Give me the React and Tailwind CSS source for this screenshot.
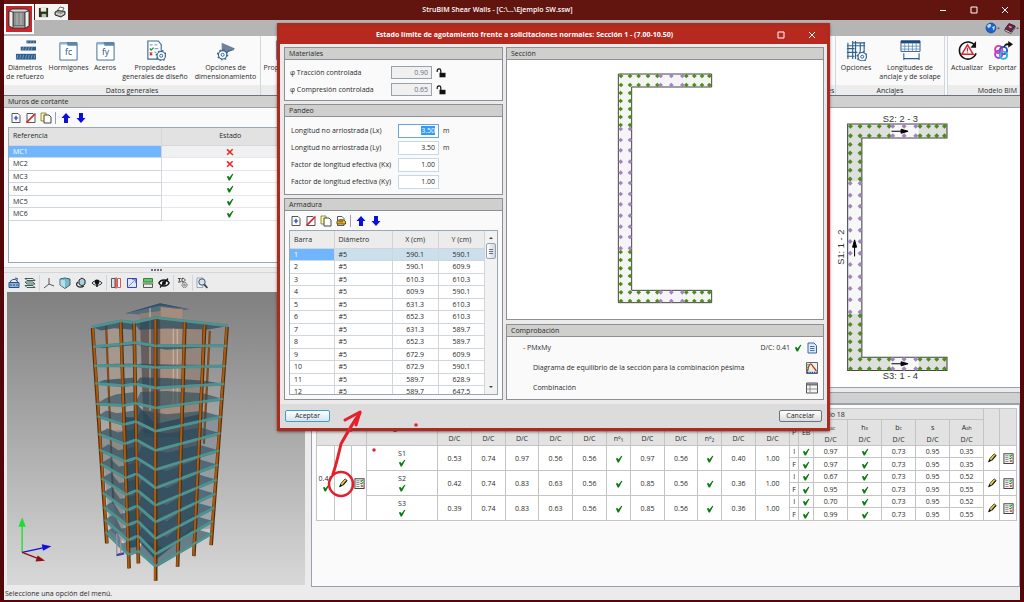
import React, { useEffect, useRef } from "react";

const walls = [
  { ref: "MC1", ok: false },
  { ref: "MC2", ok: false },
  { ref: "MC3", ok: true },
  { ref: "MC4", ok: true },
  { ref: "MC5", ok: true },
  { ref: "MC6", ok: true },
];

const bars = [
  ["590.1", "590.1"],
  ["590.1", "609.9"],
  ["610.3", "610.3"],
  ["609.9", "590.1"],
  ["631.3", "610.3"],
  ["652.3", "610.3"],
  ["631.3", "589.7"],
  ["652.3", "589.7"],
  ["672.9", "609.9"],
  ["672.9", "590.1"],
  ["589.7", "628.9"],
  ["589.7", "647.5"],
];

const OK = "ok";
const segments = [
  {
    name: "S1",
    dc: ["0.53", "0.74", "0.97", "0.56", "0.56", OK, "0.97", "0.56", OK, "0.40", "1.00"],
    i: ["0.97", OK, "0.73", "0.95", "0.35"],
    f: ["0.97", OK, "0.73", "0.95", "0.35"],
  },
  {
    name: "S2",
    dc: ["0.42", "0.74", "0.83", "0.63", "0.56", OK, "0.85", "0.56", OK, "0.36", "1.00"],
    i: ["0.67", OK, "0.73", "0.95", "0.52"],
    f: ["0.95", OK, "0.73", "0.95", "0.55"],
  },
  {
    name: "S3",
    dc: ["0.39", "0.74", "0.83", "0.63", "0.56", OK, "0.85", "0.56", OK, "0.36", "1.00"],
    i: ["0.70", OK, "0.73", "0.95", "0.52"],
    f: ["0.99", OK, "0.73", "0.95", "0.55"],
  },
];

const dcHeads = ["D/C", "D/C", "D/C", "D/C", "D/C", "nº₁", "D/C", "D/C", "nº₂", "D/C", "D/C"];
const colWidths = [18, 17, 15, 71, 34, 34, 33, 34, 34, 24, 34, 33, 24, 34, 34, 9, 15, 34, 34, 34, 34, 34, 16, 17];

/* ---------- small icons ---------- */

function Svg({ className = "size-3", box = "0 0 12 12", children }) {
  return (
    <svg viewBox={box} className={className + " shrink-0"} fill="none" aria-hidden="true">
      {children}
    </svg>
  );
}

const Check = ({ className = "inline-block size-2 align-middle" }) => (
  <Svg className={className} box="0 0 8 8">
    <path d="M.8 3.6 2.6 3 3.4 4.6 6.400.8 7.400 1 3.900 7.400H2.700Z" fill="#0b7a12" />
  </Svg>
);

const Cross = () => (
  <Svg className="inline-block size-2 align-middle" box="0 0 8 8">
    <path d="M1 1.4 7 7M6.6 1.2 1.2 6.8" stroke="#e0242a" strokeWidth="1.5" />
  </Svg>
);

const NewIcon = () => (
  <Svg>
    <path d="M2 1.500H8L10 3.500V10.500H2Z" fill="#fff" stroke="#444" strokeWidth=".9" />
    <path d="M6 3.800V8.200M3.800 6H8.200" stroke="#123cc0" strokeWidth="1.200" />
  </Svg>
);
const DeleteIcon = () => (
  <Svg>
    <path d="M2 1.500H8L10 3.500V10.500H2Z" fill="#fff" stroke="#444" strokeWidth=".9" />
    <path d="M1.500 10.500 10.500 1.500" stroke="#d8202a" strokeWidth="1.700" />
  </Svg>
);
const CopyIcon = () => (
  <Svg>
    <path d="M1 1H6V9H1Z" fill="#fbf7a0" stroke="#77762a" strokeWidth=".8" />
    <path d="M4 3H9L11 5V11H4Z" fill="#fff" stroke="#333" strokeWidth=".9" />
  </Svg>
);
const MixIcon = () => (
  <Svg>
    <path d="M2.500 1.500H7L9 3.500V10.500H2.500Z" fill="#fff" stroke="#444" strokeWidth=".9" />
    <path d="M2 6.500C3 4 9 4 10.500 6.500V9H2Z" fill="#e8c020" stroke="#3a2c00" strokeWidth=".8" />
    <path d="M3.500 6.800H8" stroke="#c22" strokeWidth="1" />
    <path d="M3 5.500 6.500 4 8.500 5.500Z" fill="#2a8c2f" />
  </Svg>
);
const UpIcon = () => (
  <Svg>
    <path d="M6 1 10.500 6H8V11H4V6H1.500Z" fill="#0a10d8" />
  </Svg>
);
const DownIcon = () => (
  <Svg>
    <path d="M6 11 10.500 6H8V1H4V6H1.500Z" fill="#0a10d8" />
  </Svg>
);
const Pencil = () => (
  <Svg className="inline-block size-[10px] align-middle">
    <path d="M2 10.500 3.500 6.500 8.500 1 10.800 2.800 6 8.500Z" fill="#e6d23a" stroke="#222" strokeWidth=".9" />
    <path d="M1.500 11 3 7.500 5.500 9Z" fill="#111" />
    <path d="M6 8.500 10.800 2.800" stroke="#222" strokeWidth="1.500" />
  </Svg>
);
const ListIcon = () => (
  <Svg className="inline-block size-[11px] align-middle">
    <path d="M1 .8H11V11.400H1Z" fill="#f4f4f4" stroke="#444" strokeWidth="1.100" />
    <path d="M2.500 3H6M2.500 5H6M2.500 7H6M2.500 9.300H6" stroke="#777" strokeWidth=".9" />
    <path d="M7 2.800 8 3.700 9.800 2M7 5.500 8 6.400 9.800 4.800" stroke="#15902a" strokeWidth="1.100" />
    <path d="M7.500 7.800 9.500 9.800M9.500 7.800 7.500 9.800" stroke="#d22" strokeWidth="1" />
  </Svg>
);
const Padlock = () => (
  <Svg className="size-[10px]" box="0 0 10 10">
    <path d="M1.200 4V2.800a1.700 1.700 0 0 1 3.600-.3V5" stroke="#111" strokeWidth="1.200" />
    <path d="M3.500 4.800H9.500V9.300H3.500Z" fill="#111" />
  </Svg>
);

/* ---------- view toolbar icons ---------- */

const viewIcons = [
  { label: "Vistas", d: <><path d="M1 5.500H11V10.500H1Z" fill="#8fb4dc" stroke="#28527e" /><path d="M2.500 5C3 1.500 9 1.500 9.500 5M7 1 9.500 1.500 8.500 4M3 7v2M6 7v2M9 7v2" stroke="#28527e" /></> },
  { label: "Plantas", end: true, d: <path d="M1 1.500H9L11 3.500H3ZM1 5H9L11 7H3ZM1 8.500H9L11 10.500H3Z" fill="#e3eeea" stroke="#2e4a48" strokeWidth=".9" /> },
  { label: "Ejes", d: <path d="M6 1V7L1 11M6 7 11 9" stroke="#555" strokeWidth="1" /> },
  { label: "Volumen", d: <><path d="M1 2 6 1 11 2V8L6 11.500 1 8Z" fill="#79b8c8" stroke="#2e5866" strokeWidth=".9" /><path d="M6 3.500V11L1.500 8V2.500Z" fill="#b9dde6" /></> },
  { label: "Girar", d: <><path d="M4 3 7 1 10 3V7L7 9 4 7Z" fill="#a9cfe0" stroke="#222" /><path d="M3 5C-1 8 4 12 9 9" stroke="#222" strokeWidth="1.200" /></> },
  { label: "Órbita", end: true, d: <><path d="M1 6C3 3 9 3 11 6 9 9 3 9 1 6Z" stroke="#333" /><circle cx="6" cy="5" r="2.400" fill="#111" /><path d="M6 7V10" stroke="#111" strokeWidth="1.500" /></> },
  { label: "Alzado", d: <><path d="M1.500 1.500H5V10.500H1.500Z" fill="#cfe6f0" stroke="#333" strokeWidth=".8" /><path d="M6 .5V11.500" stroke="#e02020" strokeWidth="1.300" /><path d="M7.500 1.500H10.500V10.500H7.500Z" fill="#fff" stroke="#c33" strokeWidth=".8" /></> },
  { label: "Corte", d: <><path d="M1.500 1.500H10.500V10.500H1.500Z" fill="#dfe6fa" stroke="#2438a8" strokeWidth=".9" /><path d="M2.500 9.500 9.500 2.500M6 2.500H9.500V6" stroke="#6377cc" strokeWidth=".8" /></> },
  { label: "Nivel", d: <><path d="M1.500 1.500H10.500V5H1.500Z" fill="#5ecb6a" stroke="#2a6a30" strokeWidth=".8" /><path d="M1.500 7H10.500V10.500H1.500Z" fill="#eee" stroke="#333" strokeWidth=".8" /><path d="M.5 6H11.500" stroke="#169a26" strokeWidth=".9" strokeDasharray="2 1" /></> },
  { label: "Ocultar", end: true, d: <><path d="M.8 6C3 2 9 2 11.200 6 9 10 3 10 .8 6Z" fill="#fff" stroke="#111" strokeWidth="1.300" /><circle cx="6" cy="6" r="2" fill="#111" /><path d="M2 10.500 10 1.500" stroke="#111" strokeWidth="1.200" /></> },
  { label: "3D", end: true, d: <><path d="M1 1.500H3.500L2 3 3.500 5H1M5 1.200V5C9 5 9 1.200 5 1.200Z" stroke="#333" strokeWidth=".9" /><circle cx="7.500" cy="8" r="2.600" fill="#ddd" stroke="#666" strokeWidth="1" strokeDasharray="1.500 .6" /><circle cx="7.500" cy="8" r=".9" stroke="#666" strokeWidth=".7" /></> },
  { label: "Buscar", d: <><path d="M1 1H7V10.500H1Z" fill="#eef2f6" stroke="#8899aa" strokeWidth=".8" /><circle cx="6" cy="5" r="3.200" fill="#cfe4f2" stroke="#456" strokeWidth="1" /><path d="M8.300 7.400 11.300 11" stroke="#345" strokeWidth="1.800" /></> },
];

/* ---------- ribbon icons ---------- */

const gear = (
  <>
    <circle cx="17" cy="16.500" r="4.400" fill="#fff" stroke="#2f6190" strokeWidth="1.200" />
    <circle cx="17" cy="16.500" r="5.300" stroke="#2f6190" strokeWidth="1.300" strokeDasharray="1.700 2.460" />
    <circle cx="17" cy="16.500" r="1.600" stroke="#2f6190" strokeWidth="1" />
  </>
);

const folder = (text) => (
  <>
    <path d="M2 3H20V21H2Z" fill="#fff" stroke="#3b6a94" strokeWidth="1" />
    <path d="M2 3.500H20" stroke="#8fb0cc" strokeWidth="2.400" />
    <path d="M9 2H20V6H10Z" fill="#5d85a8" />
    <text x="11" y="16" textAnchor="middle" fontSize="9" fill="#23507c">{text}</text>
  </>
);

const ribbonIcons = {
  bars: (
    <>
      <path d="M12 2H22" stroke="#2b5d8c" strokeWidth="3" />
      <path d="M1 17.500H22" stroke="#2b5d8c" strokeWidth="6" />
      <path d="M6 9H22" stroke="#2b5d8c" strokeWidth="4" />
      <path d="M3 15.500 2 19.500M6 15.500 5 19.500M9 15.500 8 19.500M12 15.500 11 19.500M15 15.500 14 19.500M18 15.500 17 19.500M21 15.500 20 19.500M9 7.500 8 10.500M12 7.500 11 10.500M15 7.500 14 10.500M18 7.500 17 10.500M14 1 13 3M17 1 16 3M20 1 19 3" stroke="#bcd0e2" strokeWidth=".6" />
    </>
  ),
  fc: folder("fc"),
  fy: folder("fy"),
  props: (
    <>
      <path d="M3 1H14L17 5V20H3Z" fill="#fff" stroke="#3b6a94" strokeWidth="1.200" />
      <path d="M5 5H8M10 5H13M10 9H14M10 13H12" stroke="#86a6c4" strokeWidth="1.300" />
      <path d="M5 9 6.500 10.500 9 8" stroke="#1b9a38" strokeWidth="1.400" />
      <path d="M5 13 7.500 16M7.500 13 5 16" stroke="#c33" strokeWidth="1.200" />
      {gear}
    </>
  ),
  design: (
    <g>
      <path d="M7 3V16L21 9Z" fill="#71809c" />
      <g transform="translate(-9 -1)">{gear}</g>
      <path d="M13 12 20 10" stroke="#2f6190" />
    </g>
  ),
  columns: (
    <>
      <path d="M2 3V20M7 1V20M10 1V20M19 2V13M15 3V12M1 6H20M1 9H9M1 13H12M1 17H9M7 3H20" stroke="#2f6190" strokeWidth="1.200" />
      <g transform="translate(0 1)">{gear}</g>
    </>
  ),
  lengths: (
    <>
      <path d="M1 1H21V12H1Z" fill="#fff" stroke="#2c5c8c" strokeWidth="1" />
      <path d="M1 2H21" stroke="#1c4a80" strokeWidth="3" />
      <path d="M1 6.500H21M1 9.500H21M5 3V12M9 3V12M13 3V12M17 3V12" stroke="#5b84ac" strokeWidth=".8" />
      <path d="M4 14V21M20 14V21M4 19.500H20" stroke="#2c5c8c" strokeWidth="1.100" />
    </>
  ),
  refresh: (
    <>
      <path d="M19 6A9 9 0 1 0 20 14" stroke="#111" strokeWidth="1.600" />
      <path d="M20 1V8H14Z" fill="#111" />
      <path d="M11 5 17 15H5Z" fill="#fff" stroke="#d8242c" strokeWidth="1.500" />
      <path d="M11 8V12M11 13V14" stroke="#d8242c" strokeWidth="1.300" />
    </>
  ),
  share: (
    <>
      <circle cx="7" cy="10" r="3.800" stroke="#e0389c" strokeWidth="2" />
      <circle cx="12" cy="11" r="3.800" stroke="#3250d0" strokeWidth="2" />
      <circle cx="7" cy="15" r="3.800" stroke="#b03fd8" strokeWidth="2" />
      <circle cx="12" cy="16" r="3.800" stroke="#1fb6d8" strokeWidth="2" />
      <path d="M12 8C13 4 15 3.500 17 3.500V1L22 4.500 17 8V5.500C15 5.500 14 6 12 8Z" fill="#111" />
    </>
  ),
};

function RibbonItem({ icon, lines, className }) {
  return (
    <button className={"flex shrink-0 flex-col items-center pt-1 leading-[9px] " + className}>
      <Svg className="mb-[2px] size-[21px]" box="0 0 22 22">{ribbonIcons[icon]}</Svg>
      {lines.map((l) => (
        <span key={l} className="whitespace-nowrap">{l}</span>
      ))}
    </button>
  );
}

function RibbonGroup({ title, className = "", children }) {
  return (
    <div className={"flex flex-col border-r border-gray-300 " + className}>
      <div className="flex flex-1">{children}</div>
      <div className="h-[10px] overflow-hidden bg-[#ececec] text-center leading-[12px] whitespace-nowrap">{title}</div>
    </div>
  );
}

/* ---------- shared pieces ---------- */

function Panel({ title, className = "", children }) {
  return (
    <section className={"flex flex-col border border-[#8c8f94] bg-[#fafafa] " + className}>
      <h2 className="h-3 shrink-0 border-b border-[#8c8f94] bg-[#cfcfcd] px-1 leading-[11px]">{title}</h2>
      {children}
    </section>
  );
}

function IconButton({ label, wide, children }) {
  return (
    <button aria-label={label} className={"flex h-[15px] items-center justify-center " + (wide ? "w-4" : "w-[15px]")}>
      {children}
    </button>
  );
}

function EditTools({ mix }) {
  return (
    <div className="flex h-[19px] shrink-0 items-center">
      <IconButton label="Añadir"><NewIcon /></IconButton>
      <IconButton label="Borrar"><DeleteIcon /></IconButton>
      <IconButton label="Copiar"><CopyIcon /></IconButton>
      {mix && <IconButton label="Editar"><MixIcon /></IconButton>}
      <span className="mx-[2px] h-3 w-px bg-gray-400" />
      <IconButton label="Subir"><UpIcon /></IconButton>
      <IconButton label="Bajar"><DownIcon /></IconButton>
    </div>
  );
}

/* ---------- wall section drawing ---------- */

const armX = [348, 375, 401, 429, 457, 544, 568, 591, 613];
const armPurple = [467, 499, 532];
const webGreen = [219, 243, 267, 291, 315, 696, 720, 745, 768, 792];
const webPurple = [327, 360, 391, 425, 458, 489, 522, 553, 587, 620, 651, 685];

function WallShape({ end = "#f3f5f0", mid = "#f6f3f9", transform }) {
  const dots = [];
  [168, 195, 817, 843].forEach((y) => {
    armX.forEach((x) => dots.push([x, y, "#4f8a1c"]));
    armPurple.forEach((x) => dots.push([x, y, "#a284bd"]));
  });
  [347, 375].forEach((x) => {
    webGreen.forEach((y) => dots.push([x, y, "#4f8a1c"]));
    webPurple.forEach((y) => dots.push([x, y, "#a284bd"]));
  });
  return (
    <g transform={transform}>
      <path d="M340 162H620V201H380V811H620V848H340Z" fill={end} />
      <path d="M460 162H540V201H460ZM460 811H540V848H460ZM340 321H380V690H340Z" fill={mid} />
      <path d="M340 162H620V201H380V811H620V848H340Z" fill="none" stroke="#444" strokeWidth="3" />
      {dots.map(([x, y, c], i) => (
        <path key={i} d={`M${x - 7} ${y}L${x} ${y - 7}L${x + 7} ${y}L${x} ${y + 7}Z`} fill={c} />
      ))}
    </g>
  );
}

function WallPreview() {
  return (
    <svg viewBox="18 39 567 840" className="h-full w-[189px]" role="img" aria-label="Segmentos del muro">
      <WallShape end="#dde0dc" mid="#f7f7f7" transform="translate(-296 -88) scale(1.068 1.0816)" />
      <g fill="#333" fontSize="28" fontFamily="'Liberation Sans', Arial, sans-serif" textAnchor="middle">
        <text x="226" y="81">S2: 2 - 3</text>
        <text x="226" y="856">S3: 1 - 4</text>
        <text x="56" y="458" transform="rotate(-90 56 458)">S1: 1 - 2</text>
      </g>
      <g stroke="#000" strokeWidth="3" fill="#000">
        <path d="M199 109H232M228 103 249 109 228 115Z" />
        <path d="M199 809H232M228 803 249 809 228 815Z" />
        <path d="M88 486V454M82 458 88 436 94 458Z" />
      </g>
    </svg>
  );
}

/* ---------- 3D building ---------- */

const left = [168, 228, 285, 338, 400, 437, 490, 538, 580, 624, 667, 710, 748, 785];
const notchA = [150, 220, 285, 345, 405, 462, 520, 573, 623, 673, 720, 765, 810, 853];
const notchB = [155, 215, 285, 340, 398, 453, 508, 562, 610, 660, 707, 753, 797, 843];
const front = [140, 225, 290, 352, 412, 482, 540, 598, 653, 705, 755, 805, 852, 888];
const right = [165, 225, 286, 340, 385, 438, 488, 540, 583, 628, 670, 712, 752, 790];

function Building() {
  const slabs = left.map((y, i) => {
    const l = [275 + i * 3.2, y];
    const a = [362 + i * 1.8, notchA[i]];
    const b = [402 + i, notchB[i]];
    const f = [467, front[i]];
    const r = [685 - i * 3.8, right[i]];
    // the slab's far side sits below the near edge on the top floors and above it further down
    const d = Math.max(22 - i * 14, -34);
    return {
      edge: [l, a, b, f, r],
      wing: [l, a, b, [b[0], b[1] + d], [a[0] - 20, a[1] + d], [l[0] + 28, y + d / 2]],
      body: [b, f, r, [r[0] - 60, r[1] + d / 2], [500, f[1] + d * 1.5], [b[0] + 15, b[1] + d]],
    };
  });
  const pts = (list) => list.map((p) => p.join(",")).join(" ");
  return (
    <svg viewBox="21 63 894 882" className="h-full w-full" role="img" aria-label="Modelo 3D del edificio">
      <path d="M375 128 480 97 568 115 458 134Z" fill="#566c7c" />
      <g stroke="#86491a" strokeWidth="7">
        <path d="M318 165 340 700M630 180 612 520M610 175 600 520" />
      </g>
      <path d="M420 128 550 112V500H430Z" fill="#8d7d74" />
      <path d="M420 150 480 140V480L432 490Z" fill="#665e5e" />
      <path d="M482 108 548 116V490H482Z" fill="#a58c7c" />
      <path d="M549 150 606 170 600 450H549Z" fill="#93857c" />
      <path d="M322 160 362 150 370 780 345 790Z" fill="#ab998b" fillOpacity=".75" />
      <path d="M450 110V420M520 170V400M532 175V400" stroke="#cdbbaa" strokeWidth="3" />
      <path d="M375 128 480 97 568 115 480 104Z" fill="#33506a" />
      <path d="M410 400 467 460 600 430 590 770 467 870 413 810Z" fill="#2f4252" fillOpacity=".75" />
      <path d="M368 440H405L412 830 380 835Z" fill="#2f4452" fillOpacity=".85" />
      <path d="M300 480 368 480 378 820 330 780Z" fill="#4c6474" fillOpacity=".35" />
      <path d="M596 440 655 445 632 775 590 780Z" fill="#4c6474" fillOpacity=".3" />
      {slabs.map((s, i) => (
        <g key={i} fill="#24495c" fillOpacity={i < 4 ? 0.7 : 0.6}>
          <polygon points={pts(s.wing)} />
          <polygon points={pts(s.body)} />
        </g>
      ))}
      {slabs.map((s, i) => (
        <polyline key={i} points={pts(s.edge)} fill="none" stroke="#45888a" strokeWidth="9" />
      ))}
      <g stroke="#52300c" strokeWidth="11">
        <path d="M277 172 320 820M362 150 387 895M402 155 415 880M467 140V932M555 152 533 890M615 160 582 858M682 168 634 825" />
      </g>
      <g stroke="#ab5c12" strokeWidth="6">
        <path d="M278 172 321 820M361 150 386 895M402 155 415 880M466 140 465 932M554 152 532 890M614 160 581 858M681 168 633 825" />
      </g>
      {slabs.map((s, i) => (
        <polyline key={i} points={pts(s.edge)} fill="none" stroke="#529490" strokeWidth="7" strokeOpacity=".9" />
      ))}
      <path d="M349 855 372 850" stroke="#4a3a9c" strokeWidth="7" />
      <path d="M350 790V850M362 800V850" stroke="#9a8f9c" strokeWidth="4" />
      <g strokeWidth="4">
        <path d="M65 847V765" stroke="#18e030" />
        <path d="M54 770 65 741 76 770Z" fill="#18e030" />
        <path d="M65 847 128 833" stroke="#1010e0" />
        <path d="M124 822 153 828 128 842Z" fill="#1010e0" />
        <path d="M65 847 110 864" stroke="#901010" />
        <path d="M112 856 134 872 105 874Z" fill="#901010" />
      </g>
    </svg>
  );
}

/* ---------- main window parts ---------- */

function LeftPane() {
  return (
    <div className="flex w-[304px] shrink-0 flex-col">
      <h2 className="h-3 shrink-0 border-b border-gray-400 bg-[#d0d0ce] px-1 leading-[11px]">Muros de cortante</h2>
      <div className="bg-[#fafafa] px-1">
        <EditTools />
        <div className="h-[136px] border border-[#9aa7b5] bg-white">
          <table className="w-full table-fixed border-collapse">
            <thead>
              <tr className="h-[17px] bg-[#e2e2e2]">
                <th className="w-[152px] border-r border-b border-gray-300 px-1 text-left font-normal">Referencia</th>
                <th className="border-b border-gray-300 pr-1 font-normal">Estado</th>
              </tr>
            </thead>
            <tbody>
              {walls.map((w) => (
                <tr key={w.ref} className="odd:h-3 even:h-[13px]">
                  <td className={"border-r border-b border-gray-300 px-1 leading-[11px] " + (w.ref === "MC1" ? "bg-[#70b5ff] text-white" : "")}>{w.ref}</td>
                  <td className={"border-b border-gray-200 pr-1 text-center leading-[9px] " + (w.ref === "MC1" ? "bg-[#f0f0f0]" : "")}>
                    {w.ok ? <Check /> : <Cross />}
                  </td>
                </tr>
              ))}
            </tbody>
          </table>
        </div>
        <div className="h-1" />
      </div>
      <div className="flex h-[6px] items-center justify-center gap-px border-y border-gray-300 bg-[#ececec]">
        {[0, 1, 2, 3].map((n) => <span key={n} className="size-[2px] bg-gray-500" />)}
      </div>
      <div className="flex h-[19px] shrink-0 items-center bg-[#ececec] pl-[2px]">
        {viewIcons.map((v) => (
          <React.Fragment key={v.label}>
            <IconButton wide label={v.label}><Svg>{v.d}</Svg></IconButton>
            {v.end && <span className="mx-px h-4 w-px bg-gray-300" />}
          </React.Fragment>
        ))}
      </div>
      <div className="mx-[3px] mb-[3px] min-h-0 flex-1 bg-linear-to-b from-[#808080] to-[#d8d8d8]">
        <Building />
      </div>
    </div>
  );
}

const cell = "border border-[#c4c4c4] p-0 text-center font-normal ";

function ResultCell({ value, ...rest }) {
  return <td className={cell} {...rest}>{value === OK ? <Check /> : value}</td>;
}

function Results() {
  return (
    <table className="w-full table-fixed border-collapse bg-white leading-[9px]">
      <colgroup>
        {colWidths.map((w, i) => <col key={i} style={{ width: w }} />)}
      </colgroup>
      <thead className="bg-[#e2e2e2]">
        <tr className="h-[11px]">
          <th colSpan={3} rowSpan={2} className={cell}>PMxMy</th>
          <th rowSpan={2} className={cell}>Segmento</th>
          <th colSpan={11} className={cell} />
          <th colSpan={7} className="border border-[#c4c4c4] p-0 pl-5 text-left font-normal">Tornillo 18</th>
          <th rowSpan={2} className={cell} />
          <th rowSpan={2} className={cell} />
        </tr>
        <tr className="h-[26px] leading-[13px]">
          {dcHeads.map((h, i) => <th key={i} className={cell + "align-bottom"}>{h}</th>)}
          <th className={cell}>P</th>
          <th className={cell}>EB</th>
          {[["A", "sc"], ["h", "x"], ["b", "c"], ["s", ""], ["A", "sh"]].map(([a, sub], i) => (
            <th key={i} className={cell}>
              <span className="block h-3">{a}<small className="text-[5px]">{sub}</small></span>
              <span className="block h-3">D/C</span>
            </th>
          ))}
        </tr>
      </thead>
      <tbody>
        {segments.map((s, n) => (
          <React.Fragment key={s.name}>
            <tr className="h-3">
              {n === 0 && (
                <>
                  <td rowSpan={6} className={cell}>0.41<span className="block"><Check /></span></td>
                  <td rowSpan={6} className={cell}><button aria-label="Editar armadura"><Pencil /></button></td>
                  <td rowSpan={6} className={cell}><button aria-label="Comprobaciones"><ListIcon /></button></td>
                </>
              )}
              <td rowSpan={2} className={cell}>
                {s.name}
                <span className="block"><Check /></span>
              </td>
              {s.dc.map((v, i) => <ResultCell key={i} rowSpan={2} value={v} />)}
              <td className={cell}>I</td>
              <ResultCell value={OK} />
              {s.i.map((v, i) => <ResultCell key={i} value={v} />)}
              <td rowSpan={2} className={cell}><button aria-label={"Editar " + s.name}><Pencil /></button></td>
              <td rowSpan={2} className={cell}><button aria-label={"Comprobar " + s.name}><ListIcon /></button></td>
            </tr>
            <tr className="h-[13px]">
              <td className={cell}>F</td>
              <ResultCell value={OK} />
              {s.f.map((v, i) => <ResultCell key={i} value={v} />)}
            </tr>
          </React.Fragment>
        ))}
      </tbody>
    </table>
  );
}

function RightPane() {
  return (
    <div className="flex min-w-0 flex-1 flex-col pl-[3px]">
      <div className="h-3 shrink-0 border-b border-gray-400 bg-[#d0d0ce]" />
      <div className="flex h-[280px] shrink-0 justify-end border-b border-gray-400 bg-white">
        <WallPreview />
      </div>
      <div className="mt-1 h-3 shrink-0 border-y border-gray-400 bg-[#d0d0ce]" />
      <div className="mb-[1px] min-h-0 flex-1 border border-gray-400 bg-[#fafafa] px-1 pt-[3px]">
        <Results />
      </div>
    </div>
  );
}

/* ---------- dialog ---------- */

function Field({ id, label, value, unit, inputRef }) {
  return (
    <div className="flex h-[17px] items-center">
      <label htmlFor={id} className="w-[107px] whitespace-nowrap">{label}</label>
      <input
        id={id}
        ref={inputRef}
        defaultValue={value}
        className="h-[14px] w-[41px] border border-[#c5d9e8] bg-white px-[3px] text-right outline-none selection:bg-[#3399ff] selection:text-white focus:border-[#6aa5d8]"
      />
      <span className="pl-1">{unit}</span>
    </div>
  );
}

function LockedField({ id, label, value }) {
  return (
    <div className="flex h-[17px] items-center">
      <label htmlFor={id} className="w-[101px] whitespace-nowrap">{`φ ${label}`}</label>
      <input id={id} disabled defaultValue={value} className="h-[13px] w-[41px] border border-gray-400 bg-[#f0f0f0] px-[3px] text-right text-gray-500" />
      <button aria-label={"Desbloquear " + label} className="ml-1"><Padlock /></button>
    </div>
  );
}

function BarTable() {
  const td = "border-r border-b border-gray-300 p-0 leading-[11px] ";
  return (
    <div className="mx-1 mb-1 flex h-[165px] overflow-hidden border border-[#9aa7b5] bg-white">
      <div className="flex-1 overflow-hidden">
        <table className="w-full table-fixed border-collapse">
          <thead>
            <tr className="h-[17px] bg-[#ececec]">
              <th className={td + "w-11 pl-1 text-left font-normal"}>Barra</th>
              <th className={td + "w-[58px] pl-1 text-left font-normal"}>Diámetro</th>
              <th className={td + "font-normal"}>X (cm)</th>
              <th className={td + "font-normal"}>Y (cm)</th>
            </tr>
          </thead>
          <tbody>
            {bars.map(([x, y], i) => (
              <tr key={i} className={"odd:h-3 even:h-[13px] " + (i === 0 ? "bg-[#cbe0ea]" : "")}>
                <td className={td + "pl-1 " + (i === 0 ? "bg-[#70b5ff] text-white" : "")}>{i + 1}</td>
                <td className={td + "pl-1"}>#5</td>
                <td className={td + "text-center"}>{x}</td>
                <td className={td + "text-center"}>{y}</td>
              </tr>
            ))}
          </tbody>
        </table>
      </div>
      <div className="flex w-3 flex-col items-center bg-[#f2f2f2]">
        <Svg className="mt-1 size-[6px]" box="0 0 6 6"><path d="M1 4 3 2 5 4Z" fill="#444" /></Svg>
        <div className="mt-[2px] flex h-4 w-[10px] flex-col items-center justify-center gap-px rounded-xs border border-gray-400 bg-linear-to-r from-white to-gray-300">
          {[0, 1, 2].map((n) => <span key={n} className="h-px w-1 bg-gray-500" />)}
        </div>
        <Svg className="mt-auto mb-1 size-[6px]" box="0 0 6 6"><path d="M1 2 3 4 5 2Z" fill="#444" /></Svg>
      </div>
    </div>
  );
}

function LimitStateDialog() {
  const lx = useRef(null);
  useEffect(() => {
    lx.current.focus();
    lx.current.select();
  }, []);

  return (
    <div role="dialog" aria-labelledby="dlg-title" className="absolute top-[23px] left-[277px] flex w-[553px] flex-col border-[3px] border-[#ad2a20] bg-[#ebe9e9] shadow-sm shadow-black/40">
      <div className="flex h-[18px] items-center bg-[#b5291f] text-white">
        <h1 id="dlg-title" className="flex-1 pl-1 text-center font-bold">
          Estado límite de agotamiento frente a solicitaciones normales: Sección 1 - (7.00-10.50)
        </h1>
        <button aria-label="Maximizar" className="w-[31px]"><Svg className="mx-auto size-2" box="0 0 8 8"><path d="M1 1H7V7H1Z" stroke="#fff" /></Svg></button>
        <button aria-label="Cerrar" className="w-[31px]"><Svg className="mx-auto size-2" box="0 0 8 8"><path d="M1 1 7 7M7 1 1 7" stroke="#fff" /></Svg></button>
      </div>

      <div className="flex gap-[3px] pt-[3px] pr-[3px] pl-1">
        <div className="flex w-[219px] shrink-0 flex-col gap-[3px]">
          <Panel title="Materiales">
            <div className="px-[5px] pt-1 pb-[2px]">
              <LockedField id="phi-t" label="Tracción controlada" value="0.90" />
              <LockedField id="phi-c" label="Compresión controlada" value="0.65" />
            </div>
          </Panel>
          <Panel title="Pandeo">
            <div className="px-[6px] pt-[5px] pb-1">
              <Field id="lx" label="Longitud no arriostrada (Lx)" value="3.50" unit="m" inputRef={lx} />
              <Field id="ly" label="Longitud no arriostrada (Ly)" value="3.50" unit="m" />
              <Field id="kx" label="Factor de longitud efectiva (Kx)" value="1.00" />
              <Field id="ky" label="Factor de longitud efectiva (Ky)" value="1.00" />
            </div>
          </Panel>
          <Panel title="Armadura">
            <div className="px-[3px]"><EditTools mix /></div>
            <BarTable />
          </Panel>
        </div>

        <div className="flex flex-1 flex-col gap-1">
          <Panel title="Sección" className="flex-1">
            <div className="relative flex-1 bg-white">
              <svg viewBox="6 120 948 777" className="absolute inset-0 h-full w-full" role="img" aria-label="Sección del muro">
                <WallShape />
              </svg>
            </div>
          </Panel>
          <Panel title="Comprobación">
            <div className="flex flex-col gap-[7px] pt-1 pr-[5px] pb-1 pl-4">
              <div className="flex h-[14px] items-center">
                <span className="flex-1">- PMxMy</span>
                <span>D/C: 0.41</span>
                <Check className="mx-1 size-2" />
                <button aria-label="Informe">
                  <Svg><path d="M2 1H8L10.500 3.500V11H2Z" fill="#dfeaf8" stroke="#3a66a8" /><path d="M4 4.500H8.500M4 6.500H8.500M4 8.500H8.500" stroke="#3a66a8" strokeWidth=".9" /></Svg>
                </button>
              </div>
              <div className="flex h-[12px] items-center pl-[10px]">
                <span className="flex-1">Diagrama de equilibrio de la sección para la combinación pésima</span>
                <button aria-label="Ver diagrama">
                  <Svg><path d="M.5 .5H11.500V11.500H.5Z" fill="#f0efe4" stroke="#666" /><path d="M1.500 9.500C3 1 5 1 6 3S9 7 10.500 9" stroke="#b03028" strokeWidth="1.200" /><path d="M2 2V8" stroke="#1a9a30" strokeWidth="1.200" strokeDasharray="1.500 1" /><path d="M1 10.500H11" stroke="#2438c8" strokeWidth="1.600" strokeDasharray="1.500 .8" /></Svg>
                </button>
              </div>
              <div className="flex h-[14px] items-center pl-[10px]">
                <span className="flex-1">Combinación</span>
                <button aria-label="Ver combinación">
                  <Svg><path d="M.5 1H11.500V11H.5Z" fill="#f5f5f5" stroke="#555" /><path d="M.5 2.500H11.500" stroke="#777" strokeWidth="2" /><path d="M4 3V11M.5 7H11.500" stroke="#888" strokeWidth=".9" /></Svg>
                </button>
              </div>
            </div>
          </Panel>
        </div>
      </div>

      <div className="mt-1 flex h-[24px] items-center justify-between bg-[#dcdcdc] px-[5px]">
        <button className="h-3 w-[45px] rounded-xs border border-[#3c9fd0] bg-linear-to-b from-white to-[#d5e4ec] leading-[10px]">Aceptar</button>
        <button className="h-3 w-[43px] rounded-xs border border-gray-500 bg-linear-to-b from-white to-[#dcdcdc] leading-[10px]">Cancelar</button>
      </div>
    </div>
  );
}

/* hand-drawn marks pointing from the pencil to the dialog */
function Marks() {
  return (
    <svg viewBox="0 0 120 110" className="pointer-events-none absolute top-[400px] left-[320px] h-[110px] w-[120px]" fill="none" stroke="#e3202c" strokeLinecap="round" strokeLinejoin="round" aria-hidden="true">
      <circle cx="21" cy="84" r="12" strokeWidth="2.500" />
      <path d="M13 74C17 62 19 52 21 44 26 35 32 24 40 13" strokeWidth="3" />
      <path d="M25 20 40 12 36 25" strokeWidth="3" />
      <circle cx="54" cy="50" r="1" fill="#e3202c" strokeWidth="1.500" />
      <circle cx="96" cy="25" r="1" fill="#e3202c" strokeWidth="1.500" />
    </svg>
  );
}

export default function App() {
  return (
    <div className="relative flex h-screen min-h-[602px] w-full flex-col overflow-hidden border-x-4 border-b-2 border-[#520808] bg-[#ebebeb] font-['Open_Sans','Noto_Sans',sans-serif] text-[7px] leading-[10px] text-[#2a2a2a]">
      <header className="relative shrink-0">
        <div className="flex h-5 items-center bg-[#62140f] text-white">
          <div className="mt-1 ml-[31px] flex h-4 w-[33px] items-center justify-around bg-[#f5f5f5]">
            <button aria-label="Guardar"><Svg className="size-[11px]"><path d="M1 1H11V11H1Z" fill="#2c3020" /><path d="M3 1H9V5H3Z" fill="#e8f0d8" /><path d="M4 7.500H9V11H4Z" fill="#b8c4a0" /></Svg></button>
            <button aria-label="Imprimir"><Svg><path d="M3 5 6 1 10 2 8 6Z" fill="#fff" stroke="#444" strokeWidth=".8" /><path d="M1 6 4 4.500 11 5.500V8.500L7 11 1 9Z" fill="#9a9a96" stroke="#222" strokeWidth=".9" /><path d="M2 7.500 7 9 10 7" stroke="#fff" strokeWidth=".8" /></Svg></button>
          </div>
          <span className="flex-1 text-center font-semibold">StruBIM Shear Walls - [C:\...\Ejemplo SW.ssw]</span>
          <button aria-label="Minimizar" className="w-[31px]"><Svg className="mx-auto size-2" box="0 0 8 8"><path d="M1 4.500H7" stroke="#fff" /></Svg></button>
          <button aria-label="Restaurar" className="w-[31px]"><Svg className="mx-auto size-2" box="0 0 8 8"><path d="M1 1H7V7H1Z" stroke="#fff" /></Svg></button>
          <button aria-label="Salir" className="w-[31px]"><Svg className="mx-auto size-2" box="0 0 8 8"><path d="M1 1 7 7M7 1 1 7" stroke="#fff" /></Svg></button>
        </div>
        <div className="flex h-4 items-center justify-end gap-1 bg-[#b5b5b5] pr-px">
          <button aria-label="Idioma" className="flex items-center">
            <Svg><circle cx="6" cy="6" r="5" fill="#1c62c8" stroke="#123a80" strokeWidth=".6" /><path d="M2 4C4 1 7 2 6 4S3 7 2 4ZM7 5 10 4 9 9Z" fill="#b8dcf8" /></Svg>
            <Svg className="size-[3px]" box="0 0 4 4"><path d="M0 1H4L2 3Z" fill="#444" /></Svg>
          </button>
          <button aria-label="Ayuda" className="flex items-center">
            <Svg><path d="M1 7 5 1.500 11 4 7 10Z" fill="#6e2450" stroke="#2c0c20" strokeWidth=".8" /><path d="M1 7 7 10 11 4.500V6L7 11.500 1 9Z" fill="#eee" stroke="#2c0c20" strokeWidth=".7" /><path d="M5 4.500 7.500 5.500" stroke="#f0d070" strokeWidth="1.200" /></Svg>
            <Svg className="size-[3px]" box="0 0 4 4"><path d="M0 1H4L2 3Z" fill="#444" /></Svg>
          </button>
        </div>
        <button aria-label="Archivo" className="absolute top-1 left-0 size-[30px] border-2 border-white bg-[#c9272c]">
          <Svg className="size-[26px]" box="0 0 26 26">
            <path d="M3 5 6 3H20L23 5V20L20 22H6L3 20Z" fill="#d8d8d4" stroke="#333" strokeWidth="1" />
            <path d="M7 6H19V20H7Z" fill="#8f9190" stroke="#444" strokeWidth=".8" />
            <path d="M11 7V19M15 7V19" stroke="#a9abaa" strokeWidth="1.500" />
            <path d="M3 5 7 6V22L3 20ZM19 6 23 5V20L19 22Z" fill="#eeeeea" stroke="#333" strokeWidth=".9" />
          </Svg>
        </button>
      </header>

      <nav className="flex h-[60px] shrink-0 justify-between border-b border-gray-500 bg-[#fafafa]">
        <div className="flex">
          <RibbonGroup title="Datos generales">
            <RibbonItem icon="bars" lines={["Diámetros", "de refuerzo"]} className="w-[42px]" />
            <RibbonItem icon="fc" lines={["Hormigones"]} className="w-[45px]" />
            <RibbonItem icon="fy" lines={["Aceros"]} className="w-[28px]" />
            <RibbonItem icon="props" lines={["Propiedades", "generales de diseño"]} className="w-[72px]" />
            <RibbonItem icon="design" lines={["Opciones de", "dimensionamiento"]} className="w-[69px]" />
          </RibbonGroup>
          <RibbonGroup>
            <RibbonItem icon="props" lines={["Propiedades"]} className="w-[46px]" />
          </RibbonGroup>
        </div>
        <div className="flex">
          <RibbonGroup title="Comprobaciones">
            <RibbonItem icon="design" lines={["Vigas"]} className="w-[57px]" />
          </RibbonGroup>
          <RibbonGroup title="Anclajes">
            <RibbonItem icon="columns" lines={["Opciones"]} className="w-[40px]" />
            <RibbonItem icon="lengths" lines={["Longitudes de", "anclaje y de solape"]} className="w-[68px]" />
          </RibbonGroup>
          <RibbonGroup title={<span className="float-right pr-[2px]">Modelo BIM</span>} className="ml-[2px] border-l">
            <RibbonItem icon="refresh" lines={["Actualizar"]} className="w-[38px]" />
            <RibbonItem icon="share" lines={["Exportar"]} className="w-[33px]" />
          </RibbonGroup>
        </div>
      </nav>

      <main className="flex min-h-0 flex-1">
        <LeftPane />
        <RightPane />
      </main>
      <footer className="h-3 shrink-0 px-px leading-3">Seleccione una opción del menú.</footer>

      <div className="absolute inset-0 -left-1">
        <LimitStateDialog />
        <Marks />
      </div>
    </div>
  );
}
